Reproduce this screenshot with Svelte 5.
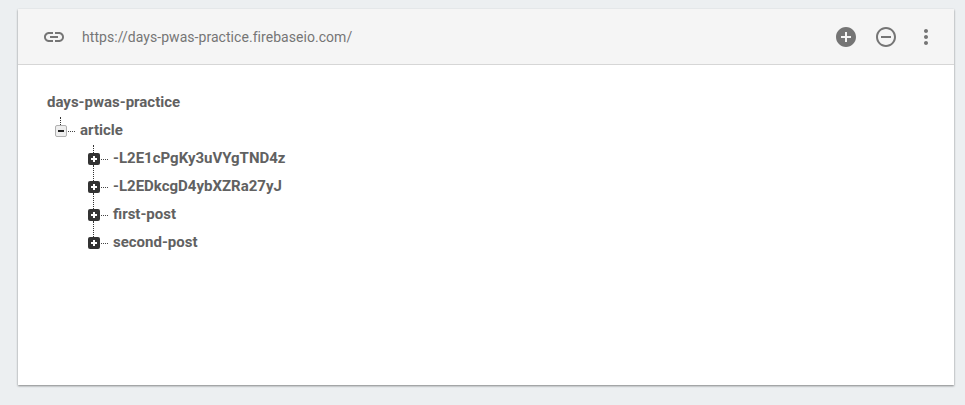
<script>
    const url = 'https://days-pwas-practice.firebaseio.com/';
    const children = ['-L2E1cPgKy3uVYgTND4z', '-L2EDkcgD4ybXZRa27yJ', 'first-post', 'second-post'];
</script>

<div class="page">
    <div class="card">
        <header class="toolbar">
            <svg class="link-icon" viewBox="0 0 24 24" width="24" height="24">
                <path d="M3.9 12c0-1.71 1.39-3.1 3.1-3.1h4V7H7c-2.76 0-5 2.24-5 5s2.24 5 5 5h4v-1.9H7c-1.71 0-3.1-1.39-3.1-3.1zM8 13h8v-2H8v2zm9-6h-4v1.9h4c1.71 0 3.1 1.39 3.1 3.1s-1.39 3.1-3.1 3.1h-4V17h4c2.76 0 5-2.24 5-5s-2.24-5-5-5z" />
            </svg>
            <span class="url">{url}</span>
            <div class="actions">
                <svg viewBox="0 0 24 24" width="24" height="24">
                    <path d="M12 2C6.48 2 2 6.48 2 12s4.48 10 10 10 10-4.48 10-10S17.52 2 12 2zm5 11h-4v4h-2v-4H7v-2h4V7h2v4h4v2z" />
                </svg>
                <svg viewBox="0 0 24 24" width="24" height="24">
                    <path d="M7 11v2h10v-2H7zm5-9C6.48 2 2 6.48 2 12s4.48 10 10 10 10-4.48 10-10S17.52 2 12 2zm0 18c-4.41 0-8-3.59-8-8s3.59-8 8-8 8 3.59 8 8-3.59 8-8 8z" />
                </svg>
                <svg viewBox="0 0 24 24" width="24" height="24">
                    <path d="M12 8c1.1 0 2-.9 2-2s-.9-2-2-2-2 .9-2 2 .9 2 2 2zm0 2c-1.1 0-2 .9-2 2s.9 2 2 2 2-.9 2-2-.9-2-2-2zm0 6c-1.1 0-2 .9-2 2s.9 2 2 2 2-.9 2-2-.9-2-2-2z" />
                </svg>
            </div>
        </header>

        <div class="tree">
            <div class="row root">days-pwas-practice</div>
            <div class="branch">
                <div class="row">
                    <span class="toggle open"></span>
                    <span class="dash"></span>
                    <span>article</span>
                </div>
                <div class="leaves">
                    {#each children as name}
                        <div class="row">
                            <span class="toggle closed"></span>
                            <span class="dash"></span>
                            <span>{name}</span>
                        </div>
                    {/each}
                </div>
            </div>
        </div>
    </div>
</div>

<style>
    :global(body) {
        background: #eceff1;
    }
    .page {
        height: 405px;
        padding: 9px 11px 20px 18px;
        box-sizing: border-box;
        font-family: Roboto, "Liberation Sans", sans-serif;
    }
    .card {
        height: 376px;
        background: #fff;
        box-shadow: 0 1px 2px rgba(0, 0, 0, 0.45);
    }
    .toolbar {
        height: 56px;
        box-sizing: border-box;
        display: flex;
        align-items: center;
        padding-left: 24px;
        background: #f5f5f5;
        border-bottom: 1px solid #d6d6d6;
    }
    .toolbar svg {
        fill: #757575;
        display: block;
    }
    .link-icon {
        margin-right: 16px;
    }
    .url {
        font-size: 14px;
        letter-spacing: 0.05px;
        color: #757575;
    }
    .actions {
        margin-left: auto;
        margin-right: 16px;
        display: flex;
        gap: 16px;
    }
    .tree {
        padding: 23px 0 0 29px;
        font-size: 15px;
        font-weight: 700;
        color: #616161;
    }
    .row {
        height: 28px;
        display: flex;
        align-items: center;
        position: relative;
    }
    .branch {
        margin-left: 8px;
    }
    .leaves {
        margin-left: 33px;
    }
    .toggle {
        width: 12px;
        height: 12px;
        margin-top: 2px;
        box-sizing: border-box;
        border-radius: 2px;
        position: relative;
        flex: none;
        z-index: 1;
    }
    .toggle.open {
        background: #eeeeee;
        border: 1px solid #b0b0b0;
    }
    .toggle.closed {
        background: #333333;
    }
    .toggle::before,
    .toggle::after {
        content: "";
        position: absolute;
        left: 50%;
        top: 50%;
    }
    .toggle::before {
        width: 6px;
        height: 2px;
        margin: -1px 0 0 -3px;
    }
    .toggle.open::before {
        background: #222222;
    }
    .toggle.closed::before,
    .toggle.closed::after {
        background: #ffffff;
    }
    .toggle.closed::after {
        width: 2px;
        height: 6px;
        margin: -3px 0 0 -1px;
    }
    .dash {
        width: 7px;
        margin: 2px 5px 0 1px;
        border-top: 1px dotted #444;
        flex: none;
    }
    .row::before {
        content: "";
        position: absolute;
        left: 5px;
        border-left: 1px dotted #333;
    }
    .root::before {
        display: none;
    }
    .branch > .row::before {
        top: 1px;
        height: 8px;
    }
    .leaves > .row::before {
        top: -7px;
        height: 16px;
    }
    .leaves > .row:first-child::before {
        top: 1px;
        height: 8px;
    }
</style>
